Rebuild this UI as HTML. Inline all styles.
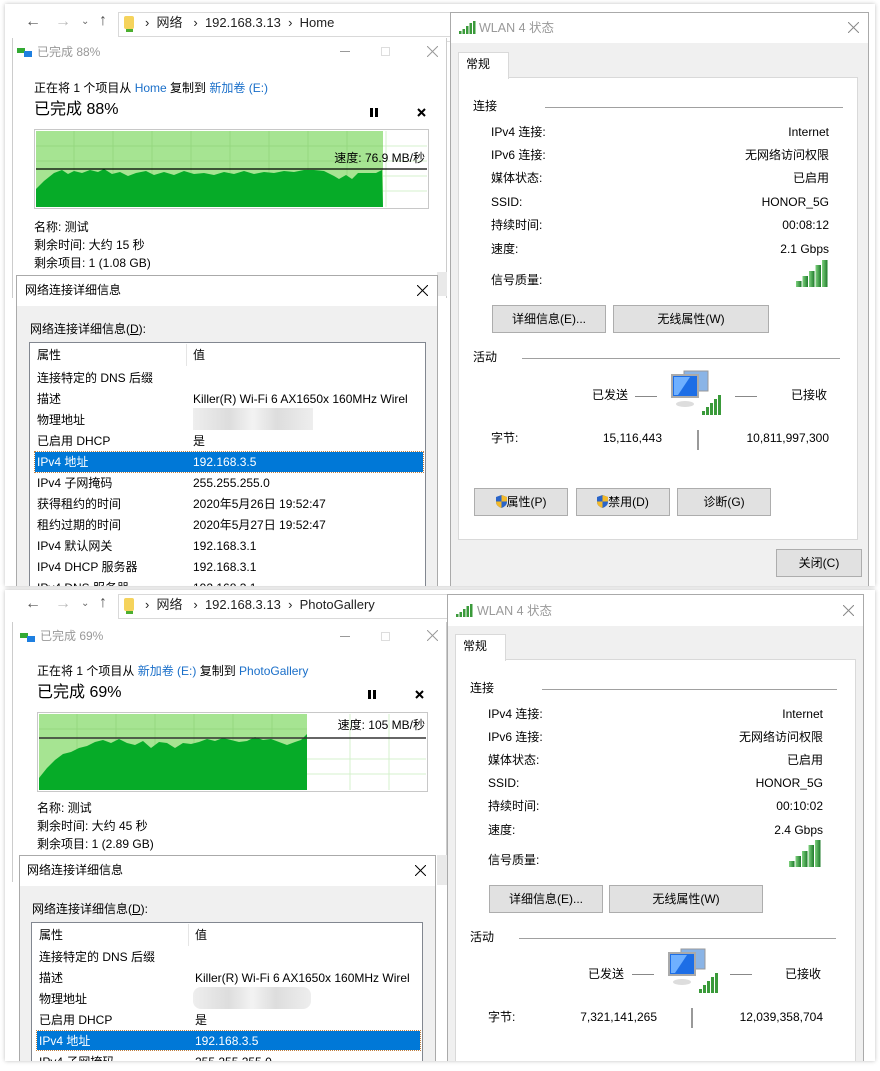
<!DOCTYPE html>
<html><head><meta charset="utf-8"><style>
*{margin:0;padding:0;box-sizing:border-box}
body{width:880px;height:1071px;background:#fff;position:relative;overflow:hidden;font-family:"Liberation Sans","Noto Sans CJK SC",sans-serif;font-size:12px;color:#000}
.a{position:absolute}
.t{position:absolute;white-space:nowrap;line-height:16px}
.r{text-align:right}
.half{position:absolute;left:5px;width:870px;overflow:hidden;background:#fff;box-shadow:0 0 4px rgba(0,0,0,.25)}
.btn{position:absolute;background:#e1e1e1;border:1px solid #adadad;text-align:center;line-height:26px;font-size:12px}
.gray{color:#999}
.blue{color:#1a6fc9}
.sel{position:absolute;background:#0078d7;outline:1px dotted #c08040}
</style></head><body>

<!-- ================= TOP HALF ================= -->
<div class="half" style="top:4px;height:582px">
<div class="a" style="left:0;top:0;width:870px;height:582px">
 <div class="a" style="left:7px;top:8px;width:440px;height:30px;background:#fff;border-bottom:1px solid #ddd"></div>
 <div class="t" style="left:20px;top:10px;font-size:16px;color:#555">&#8592;</div>
 <div class="t" style="left:50px;top:10px;font-size:16px;color:#bbb">&#8594;</div>
 <div class="t" style="left:76px;top:10px;font-size:10px;color:#666">&#8964;</div>
 <div class="t" style="left:94px;top:9px;font-size:16px;color:#555">&#8593;</div>
 <div class="a" style="left:113px;top:8px;width:340px;height:25px;border:1px solid #d9d9d9"></div>
 <div class="a" style="left:119px;top:12px;width:10px;height:13px;background:#f5d35c;border-radius:2px"></div>
 <div class="a" style="left:121px;top:25px;width:7px;height:3px;background:#4caf30"></div>
 <div class="t" style="left:140px;top:11px;font-size:13px;color:#222">&#8250;&nbsp;&nbsp;网络&nbsp;&nbsp;&nbsp;&#8250;&nbsp;&nbsp;192.168.3.13&nbsp;&nbsp;&#8250;&nbsp;&nbsp;Home</div>
 <div class="a" style="left:7px;top:34px;width:435px;height:260px;background:#fff;border-left:1px solid #ccc;border-right:1px solid #ccc"></div>
 <div class="a" style="left:12px;top:44px;width:8px;height:5px;background:#3a3"></div>
 <div class="a" style="left:19px;top:47px;width:8px;height:6px;background:#1e7fe0"></div>
 <div class="t gray" style="left:32px;top:40px;font-size:12px">已完成 88%</div>
 <div class="a" style="left:335px;top:47px;width:10px;height:1px;background:#999"></div>
 <div class="a" style="left:376px;top:43px;width:9px;height:9px;border:1px solid #ddd"></div>
 <svg class="a" style="left:422px;top:42px" width="11" height="11"><path d="M0,0L11,11M11,0L0,11" stroke="#999"/></svg>
 <div class="t" style="left:29px;top:76px">正在将 1 个项目从 <span class="blue">Home</span> 复制到 <span class="blue">新加卷 (E:)</span></div>
 <div class="t" style="left:29px;top:96px;font-size:16px;line-height:20px">已完成 88%</div>
 <div class="a" style="left:365px;top:104px;width:3px;height:9px;background:#000"></div>
 <div class="a" style="left:370px;top:104px;width:3px;height:9px;background:#000"></div>
 <svg class="a" style="left:412px;top:104px" width="9" height="9"><path d="M1,1L8,8M8,1L1,8" stroke="#000" stroke-width="2"/></svg>
 <svg class="a" style="left:29px;top:125px" width="395" height="80">
  <rect x="0.5" y="0.5" width="394" height="79" fill="#fff" stroke="#c8c8c8"/>
  <rect x="2" y="2" width="347" height="76" fill="#a6e492"/>
  <g stroke="#95d880" stroke-width="1">
   <line x1="40" y1="2" x2="40" y2="78"/><line x1="79" y1="2" x2="79" y2="78"/><line x1="118" y1="2" x2="118" y2="78"/><line x1="157" y1="2" x2="157" y2="78"/><line x1="196" y1="2" x2="196" y2="78"/><line x1="235" y1="2" x2="235" y2="78"/><line x1="274" y1="2" x2="274" y2="78"/><line x1="313" y1="2" x2="313" y2="78"/>
   <line x1="2" y1="17" x2="349" y2="17"/><line x1="2" y1="32" x2="349" y2="32"/>
  </g>
  <g stroke="#d4f0cc"><line x1="349" y1="17" x2="393" y2="17"/><line x1="349" y1="32" x2="393" y2="32"/><line x1="349" y1="47" x2="393" y2="47"/><line x1="349" y1="62" x2="393" y2="62"/><line x1="352" y1="2" x2="352" y2="78"/></g>
  <path d="M2,78 L2,60 L10,52 L20,44 L28,41 L34,45 L40,42 L48,44 L56,41 L64,43 L70,40 L78,45 L86,43 L94,47 L102,44 L112,42 L120,46 L130,43 L140,46 L150,42 L160,45 L170,44 L180,46 L190,43 L200,45 L210,42 L220,45 L230,43 L240,44 L250,42 L260,43 L270,41 L280,41 L290,42 L300,47 L305,50 L312,46 L318,50 L324,44 L334,44 L342,44 L348,41 L349,78 Z" fill="#06ab28"/>
  <line x1="2" y1="40" x2="393" y2="40" stroke="#000" stroke-width="1.2"/>
 </svg>
 <div class="t" style="left:280px;top:146px;width:140px;text-align:right">速度: 76.9 MB/秒</div>
 <div class="t" style="left:29px;top:215px">名称: 测试</div>
 <div class="t" style="left:29px;top:233px">剩余时间: 大约 15 秒</div>
 <div class="t" style="left:29px;top:251px">剩余项目: 1 (1.08 GB)</div>
 <div class="a" style="left:432px;top:268px;width:10px;height:24px;background:#e9e9e9"></div>
 <div class="a" style="left:11px;top:271px;width:422px;height:320px;background:#f0f0f0;border:1px solid #aaa"></div>
 <div class="a" style="left:12px;top:272px;width:420px;height:30px;background:#fff"></div>
 <div class="t" style="left:20px;top:278px">网络连接详细信息</div>
 <svg class="a" style="left:412px;top:281px" width="11" height="11"><path d="M0,0L11,11M11,0L0,11" stroke="#000"/></svg>
 <div class="t" style="left:25px;top:317px">网络连接详细信息(<u>D</u>):</div>
 <div class="a" style="left:24px;top:338px;width:397px;height:260px;background:#fff;border:1px solid #828790"></div>
 <div class="a" style="left:181px;top:340px;width:1px;height:22px;background:#e5e5e5"></div>
 <div class="sel" style="left:30px;top:448px;width:388px;height:20px"></div>
 <div class="t" style="left:32px;top:343px">属性</div><div class="t" style="left:188px;top:343px">值</div>
 <div class="t" style="left:32px;top:366px">连接特定的 DNS 后缀</div>
 <div class="t" style="left:32px;top:387px">描述</div><div class="t" style="left:188px;top:387px">Killer(R) Wi-Fi 6 AX1650x 160MHz Wirel</div>
 <div class="t" style="left:32px;top:408px">物理地址</div>
 <div class="a" style="left:188px;top:404px;width:120px;height:22px;background:linear-gradient(90deg,#eee,#ddd 30%,#f3f3f3 50%,#ddd 70%,#eee)"></div>
 <div class="t" style="left:32px;top:429px">已启用 DHCP</div><div class="t" style="left:188px;top:429px">是</div>
 <div class="t" style="left:32px;top:450px;color:#fff">IPv4 地址</div><div class="t" style="left:188px;top:450px;color:#fff">192.168.3.5</div>
 <div class="t" style="left:32px;top:471px">IPv4 子网掩码</div><div class="t" style="left:188px;top:471px">255.255.255.0</div>
 <div class="t" style="left:32px;top:492px">获得租约的时间</div><div class="t" style="left:188px;top:492px">2020年5月26日 19:52:47</div>
 <div class="t" style="left:32px;top:513px">租约过期的时间</div><div class="t" style="left:188px;top:513px">2020年5月27日 19:52:47</div>
 <div class="t" style="left:32px;top:534px">IPv4 默认网关</div><div class="t" style="left:188px;top:534px">192.168.3.1</div>
 <div class="t" style="left:32px;top:555px">IPv4 DHCP 服务器</div><div class="t" style="left:188px;top:555px">192.168.3.1</div>
 <div class="t" style="left:32px;top:576px">IPv4 DNS 服务器</div><div class="t" style="left:188px;top:576px">192.168.3.1</div>
 <div class="a" style="left:445px;top:8px;width:419px;height:580px;background:#f0f0f0;border:1px solid #aaa"></div>
 <div class="a" style="left:446px;top:9px;width:417px;height:30px;background:#fff"></div>
 <svg class="a" style="left:454px;top:17px" width="17" height="13"><g fill="#3a9a3a"><rect x="0" y="10" width="2.5" height="3"/><rect x="3.5" y="8" width="2.5" height="5"/><rect x="7" y="5" width="2.5" height="8"/><rect x="10.5" y="2" width="2.5" height="11"/><rect x="14" y="0" width="2.5" height="13"/></g></svg>
 <div class="t gray" style="left:474px;top:16px;font-size:12.5px">WLAN 4 状态</div>
 <svg class="a" style="left:843px;top:18px" width="11" height="11"><path d="M0,0L11,11M11,0L0,11" stroke="#888"/></svg>
 <div class="a" style="left:453px;top:73px;width:400px;height:463px;background:#fff;border:1px solid #d9d9d9"></div>
 <div class="a" style="left:453px;top:48px;width:51px;height:27px;background:#fff;border:1px solid #d9d9d9;border-bottom:none"></div>
 <div class="t" style="left:461px;top:52px">常规</div>
 <div class="t" style="left:468px;top:94px">连接</div>
 <div class="a" style="left:540px;top:103px;width:298px;height:1px;background:#a0a0a0"></div>
 <div class="t" style="left:486px;top:120px">IPv4 连接:</div><div class="t r" style="left:624px;top:120px;width:200px">Internet</div>
 <div class="t" style="left:486px;top:143px">IPv6 连接:</div><div class="t r" style="left:624px;top:143px;width:200px">无网络访问权限</div>
 <div class="t" style="left:486px;top:166px">媒体状态:</div><div class="t r" style="left:624px;top:166px;width:200px">已启用</div>
 <div class="t" style="left:486px;top:190px">SSID:</div><div class="t r" style="left:624px;top:190px;width:200px">HONOR_5G</div>
 <div class="t" style="left:486px;top:213px">持续时间:</div><div class="t r" style="left:624px;top:213px;width:200px">00:08:12</div>
 <div class="t" style="left:486px;top:237px">速度:</div><div class="t r" style="left:624px;top:237px;width:200px">2.1 Gbps</div>
 <div class="t" style="left:486px;top:268px">信号质量:</div>
 <svg class="a" style="left:791px;top:256px" width="32" height="27"><defs><linearGradient id="sg" x1="0" x2="1"><stop offset="0" stop-color="#7fd27f"/><stop offset="1" stop-color="#1d7a2a"/></linearGradient></defs><g fill="url(#sg)"><rect x="0" y="21" width="5.5" height="6"/><rect x="6.5" y="16" width="5.5" height="11"/><rect x="13" y="11" width="5.5" height="16"/><rect x="19.5" y="5" width="5.5" height="22"/><rect x="26" y="0" width="5.5" height="27"/></g></svg>
 <div class="btn" style="left:487px;top:301px;width:114px;height:28px">详细信息(E)...</div>
 <div class="btn" style="left:608px;top:301px;width:156px;height:28px">无线属性(W)</div>
 <div class="t" style="left:468px;top:345px">活动</div>
 <div class="a" style="left:517px;top:354px;width:318px;height:1px;background:#a0a0a0"></div>
 <div class="t" style="left:587px;top:383px">已发送</div>
 <div class="a" style="left:630px;top:392px;width:22px;height:1px;background:#888"></div>
 <svg class="a" style="left:665px;top:365px" width="52" height="47"><rect x="14" y="2" width="24" height="20" fill="#8ab4e6" stroke="#999"/><rect x="2" y="6" width="26" height="22" fill="#1d6ee6" stroke="#aaa" stroke-width="2"/><path d="M4,8 L20,8 L8,26 L4,26Z" fill="#6fb0ff"/><ellipse cx="15" cy="35" rx="9" ry="3" fill="#ddd"/><g fill="#3a9a3a"><rect x="32" y="42" width="3" height="4"/><rect x="36" y="38" width="3" height="8"/><rect x="40" y="34" width="3" height="12"/><rect x="44" y="30" width="3" height="16"/><rect x="48" y="26" width="3" height="20"/></g></svg>
 <div class="a" style="left:730px;top:392px;width:22px;height:1px;background:#888"></div>
 <div class="t" style="left:786px;top:383px">已接收</div>
 <div class="t" style="left:486px;top:426px">字节:</div>
 <div class="t r" style="left:557px;top:426px;width:100px">15,116,443</div>
 <div class="a" style="left:692px;top:426px;width:2px;height:20px;background:#999"></div>
 <div class="t r" style="left:700px;top:426px;width:124px">10,811,997,300</div>
 <div class="btn" style="left:469px;top:484px;width:94px;height:28px"><svg width="11" height="13" style="vertical-align:-2px"><path d="M5.5,0 L11,2 L11,7 Q11,11 5.5,13 Q0,11 0,7 L0,2Z" fill="#2a64c8"/><path d="M5.5,0 L11,2 L11,6.5 L5.5,6.5Z M0,6.5 L5.5,6.5 L5.5,13 Q0,11 0,7Z" fill="#f2b92a"/></svg>属性(P)</div>
 <div class="btn" style="left:571px;top:484px;width:94px;height:28px"><svg width="11" height="13" style="vertical-align:-2px"><path d="M5.5,0 L11,2 L11,7 Q11,11 5.5,13 Q0,11 0,7 L0,2Z" fill="#2a64c8"/><path d="M5.5,0 L11,2 L11,6.5 L5.5,6.5Z M0,6.5 L5.5,6.5 L5.5,13 Q0,11 0,7Z" fill="#f2b92a"/></svg>禁用(D)</div>
 <div class="btn" style="left:672px;top:484px;width:94px;height:28px">诊断(G)</div>
 <div class="btn" style="left:771px;top:545px;width:86px;height:28px">关闭(C)</div>
</div>
</div>

<!-- ================= BOTTOM HALF ================= -->
<div class="half" style="top:590px;height:471px">
<div class="a" style="left:0;top:0;width:870px;height:480px">
 <div class="a" style="left:7px;top:0;width:440px;height:38px;background:#fff;border-bottom:1px solid #ddd"></div>
 <div class="t" style="left:20px;top:6px;font-size:16px;color:#555">&#8592;</div>
 <div class="t" style="left:50px;top:6px;font-size:16px;color:#bbb">&#8594;</div>
 <div class="t" style="left:76px;top:6px;font-size:10px;color:#666">&#8964;</div>
 <div class="t" style="left:94px;top:5px;font-size:16px;color:#555">&#8593;</div>
 <div class="a" style="left:113px;top:4px;width:340px;height:25px;border:1px solid #d9d9d9"></div>
 <div class="a" style="left:119px;top:8px;width:10px;height:13px;background:#f5d35c;border-radius:2px"></div>
 <div class="a" style="left:121px;top:21px;width:7px;height:3px;background:#4caf30"></div>
 <div class="t" style="left:140px;top:7px;font-size:13px;color:#222">&#8250;&nbsp;&nbsp;网络&nbsp;&nbsp;&nbsp;&#8250;&nbsp;&nbsp;192.168.3.13&nbsp;&nbsp;&#8250;&nbsp;&nbsp;PhotoGallery</div>
 <div class="a" style="left:7px;top:32px;width:435px;height:260px;background:#fff;border-left:1px solid #ccc;border-right:1px solid #ccc"></div>
 <div class="a" style="left:15px;top:43px;width:8px;height:5px;background:#3a3"></div>
 <div class="a" style="left:22px;top:46px;width:8px;height:6px;background:#1e7fe0"></div>
 <div class="t gray" style="left:35px;top:38px">已完成 69%</div>
 <div class="a" style="left:335px;top:46px;width:10px;height:1px;background:#999"></div>
 <div class="a" style="left:376px;top:42px;width:9px;height:9px;border:1px solid #ddd"></div>
 <svg class="a" style="left:422px;top:40px" width="11" height="11"><path d="M0,0L11,11M11,0L0,11" stroke="#999"/></svg>
 <div class="t" style="left:32px;top:73px">正在将 1 个项目从 <span class="blue">新加卷 (E:)</span> 复制到 <span class="blue">PhotoGallery</span></div>
 <div class="t" style="left:32px;top:93px;font-size:16px;line-height:20px">已完成 69%</div>
 <div class="a" style="left:363px;top:100px;width:3px;height:9px;background:#000"></div>
 <div class="a" style="left:368px;top:100px;width:3px;height:9px;background:#000"></div>
 <svg class="a" style="left:410px;top:100px" width="9" height="9"><path d="M1,1L8,8M8,1L1,8" stroke="#000" stroke-width="2"/></svg>
 <svg class="a" style="left:32px;top:122px" width="391" height="80">
  <rect x="0.5" y="0.5" width="390" height="79" fill="#fff" stroke="#c8c8c8"/>
  <rect x="2" y="2" width="268" height="76" fill="#a6e492"/>
  <g stroke="#95d880"><line x1="40" y1="2" x2="40" y2="78"/><line x1="79" y1="2" x2="79" y2="78"/><line x1="118" y1="2" x2="118" y2="78"/><line x1="157" y1="2" x2="157" y2="78"/><line x1="196" y1="2" x2="196" y2="78"/><line x1="235" y1="2" x2="235" y2="78"/><line x1="2" y1="17" x2="270" y2="17"/></g>
  <g stroke="#d4f0cc"><line x1="270" y1="47" x2="389" y2="47"/><line x1="270" y1="62" x2="389" y2="62"/><line x1="313" y1="2" x2="313" y2="78"/><line x1="352" y1="2" x2="352" y2="78"/></g>
  <path d="M2,78 L2,66 L10,56 L18,48 L26,42 L34,40 L42,36 L50,34 L58,30 L66,28 L74,31 L82,27 L90,31 L98,33 L106,29 L114,36 L122,30 L130,31 L138,36 L146,31 L154,32 L162,30 L170,27 L178,29 L186,26 L194,28 L202,30 L210,29 L218,25 L226,28 L234,27 L242,30 L250,33 L258,30 L264,28 L270,22 L270,78 Z" fill="#06ab28"/>
  <line x1="2" y1="26" x2="389" y2="26" stroke="#333" stroke-width="1.5"/>
 </svg>
 <div class="t" style="left:280px;top:127px;width:140px;text-align:right">速度: 105 MB/秒</div>
 <div class="t" style="left:32px;top:210px">名称: 测试</div>
 <div class="t" style="left:32px;top:228px">剩余时间: 大约 45 秒</div>
 <div class="t" style="left:32px;top:246px">剩余项目: 1 (2.89 GB)</div>
 <div class="a" style="left:432px;top:265px;width:10px;height:30px;background:#e9e9e9"></div>
 <div class="a" style="left:14px;top:265px;width:417px;height:230px;background:#f0f0f0;border:1px solid #aaa"></div>
 <div class="a" style="left:15px;top:266px;width:415px;height:30px;background:#fff"></div>
 <div class="t" style="left:22px;top:272px">网络连接详细信息</div>
 <svg class="a" style="left:410px;top:275px" width="11" height="11"><path d="M0,0L11,11M11,0L0,11" stroke="#000"/></svg>
 <div class="t" style="left:27px;top:311px">网络连接详细信息(<u>D</u>):</div>
 <div class="a" style="left:26px;top:332px;width:392px;height:200px;background:#fff;border:1px solid #828790"></div>
 <div class="a" style="left:183px;top:334px;width:1px;height:22px;background:#e5e5e5"></div>
 <div class="sel" style="left:32px;top:441px;width:383px;height:19px"></div>
 <div class="t" style="left:34px;top:337px">属性</div><div class="t" style="left:190px;top:337px">值</div>
 <div class="t" style="left:34px;top:359px">连接特定的 DNS 后缀</div>
 <div class="t" style="left:34px;top:380px">描述</div><div class="t" style="left:190px;top:380px">Killer(R) Wi-Fi 6 AX1650x 160MHz Wirel</div>
 <div class="t" style="left:34px;top:401px">物理地址</div>
 <div class="a" style="left:188px;top:397px;width:118px;height:22px;background:linear-gradient(90deg,#eee,#ddd 30%,#f3f3f3 50%,#ddd 70%,#eee);border-radius:8px"></div>
 <div class="t" style="left:34px;top:422px">已启用 DHCP</div><div class="t" style="left:190px;top:422px">是</div>
 <div class="t" style="left:34px;top:443px;color:#fff">IPv4 地址</div><div class="t" style="left:190px;top:443px;color:#fff">192.168.3.5</div>
 <div class="t" style="left:34px;top:464px">IPv4 子网掩码</div><div class="t" style="left:190px;top:464px">255.255.255.0</div>
 <div class="a" style="left:442px;top:4px;width:417px;height:480px;background:#f0f0f0;border:1px solid #aaa"></div>
 <div class="a" style="left:443px;top:5px;width:415px;height:31px;background:#fff"></div>
 <svg class="a" style="left:451px;top:14px" width="17" height="13"><g fill="#3a9a3a"><rect x="0" y="10" width="2.5" height="3"/><rect x="3.5" y="8" width="2.5" height="5"/><rect x="7" y="5" width="2.5" height="8"/><rect x="10.5" y="2" width="2.5" height="11"/><rect x="14" y="0" width="2.5" height="13"/></g></svg>
 <div class="t gray" style="left:472px;top:13px;font-size:12.5px">WLAN 4 状态</div>
 <svg class="a" style="left:838px;top:15px" width="11" height="11"><path d="M0,0L11,11M11,0L0,11" stroke="#888"/></svg>
 <div class="a" style="left:450px;top:69px;width:401px;height:420px;background:#fff;border:1px solid #d9d9d9"></div>
 <div class="a" style="left:450px;top:44px;width:51px;height:27px;background:#fff;border:1px solid #d9d9d9;border-bottom:none"></div>
 <div class="t" style="left:458px;top:48px">常规</div>
 <div class="t" style="left:465px;top:90px">连接</div>
 <div class="a" style="left:537px;top:99px;width:295px;height:1px;background:#a0a0a0"></div>
 <div class="t" style="left:483px;top:116px">IPv4 连接:</div><div class="t r" style="left:618px;top:116px;width:200px">Internet</div>
 <div class="t" style="left:483px;top:139px">IPv6 连接:</div><div class="t r" style="left:618px;top:139px;width:200px">无网络访问权限</div>
 <div class="t" style="left:483px;top:162px">媒体状态:</div><div class="t r" style="left:618px;top:162px;width:200px">已启用</div>
 <div class="t" style="left:483px;top:185px">SSID:</div><div class="t r" style="left:618px;top:185px;width:200px">HONOR_5G</div>
 <div class="t" style="left:483px;top:208px">持续时间:</div><div class="t r" style="left:618px;top:208px;width:200px">00:10:02</div>
 <div class="t" style="left:483px;top:232px">速度:</div><div class="t r" style="left:618px;top:232px;width:200px">2.4 Gbps</div>
 <div class="t" style="left:483px;top:262px">信号质量:</div>
 <svg class="a" style="left:784px;top:250px" width="32" height="27"><g fill="url(#sg)"><rect x="0" y="21" width="5.5" height="6"/><rect x="6.5" y="16" width="5.5" height="11"/><rect x="13" y="11" width="5.5" height="16"/><rect x="19.5" y="5" width="5.5" height="22"/><rect x="26" y="0" width="5.5" height="27"/></g></svg>
 <div class="btn" style="left:484px;top:295px;width:114px;height:28px">详细信息(E)...</div>
 <div class="btn" style="left:604px;top:295px;width:154px;height:28px">无线属性(W)</div>
 <div class="t" style="left:465px;top:339px">活动</div>
 <div class="a" style="left:514px;top:348px;width:317px;height:1px;background:#a0a0a0"></div>
 <div class="t" style="left:583px;top:376px">已发送</div>
 <div class="a" style="left:627px;top:384px;width:22px;height:1px;background:#888"></div>
 <svg class="a" style="left:662px;top:357px" width="52" height="47"><rect x="14" y="2" width="24" height="20" fill="#8ab4e6" stroke="#999"/><rect x="2" y="6" width="26" height="22" fill="#1d6ee6" stroke="#aaa" stroke-width="2"/><path d="M4,8 L20,8 L8,26 L4,26Z" fill="#6fb0ff"/><ellipse cx="15" cy="35" rx="9" ry="3" fill="#ddd"/><g fill="#3a9a3a"><rect x="32" y="42" width="3" height="4"/><rect x="36" y="38" width="3" height="8"/><rect x="40" y="34" width="3" height="12"/><rect x="44" y="30" width="3" height="16"/><rect x="48" y="26" width="3" height="20"/></g></svg>
 <div class="a" style="left:725px;top:384px;width:22px;height:1px;background:#888"></div>
 <div class="t" style="left:780px;top:376px">已接收</div>
 <div class="t" style="left:483px;top:419px">字节:</div>
 <div class="t r" style="left:552px;top:419px;width:100px">7,321,141,265</div>
 <div class="a" style="left:686px;top:418px;width:2px;height:20px;background:#999"></div>
 <div class="t r" style="left:694px;top:419px;width:124px">12,039,358,704</div>
</div>
</div>
</body></html>
